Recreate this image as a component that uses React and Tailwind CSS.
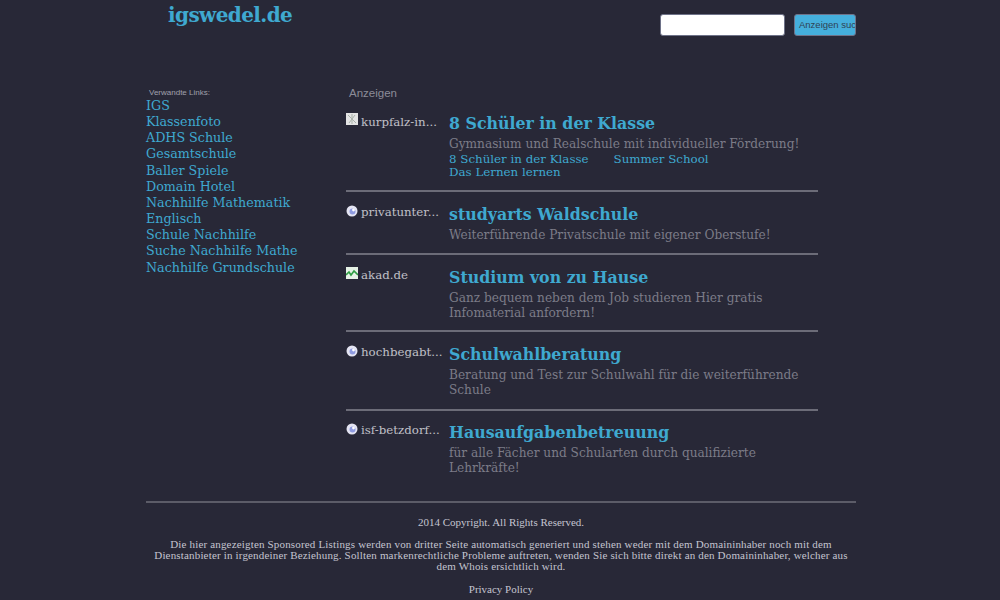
import React from "react";

const sideLinks = [
  "IGS",
  "Klassenfoto",
  "ADHS Schule",
  "Gesamtschule",
  "Baller Spiele",
  "Domain Hotel",
  "Nachhilfe Mathematik Englisch",
  "Schule Nachhilfe",
  "Suche Nachhilfe Mathe",
  "Nachhilfe Grundschule",
];

const Globe = () => (
  <svg width="12" height="12" viewBox="0 0 12 12" className="mt-[1px]">
    <circle cx="6" cy="6" r="5.5" fill="#e4e4f2" />
    <circle cx="6.5" cy="6.5" r="3" fill="#8f9be0" />
    <circle cx="7.5" cy="5" r="1.4" fill="#ffffff" />
  </svg>
);

const Kurpfalz = () => (
  <svg width="12" height="12" viewBox="0 0 12 12">
    <rect width="12" height="12" fill="#e4e4e4" />
    <path d="M2 2l8 8M9 2L3 10M6 1v10" stroke="#a9b2a9" strokeWidth="1" />
  </svg>
);

const Akad = () => (
  <svg width="12" height="12" viewBox="0 0 12 12">
    <rect width="12" height="12" fill="#e6f2e6" />
    <path d="M0 8l3-3 2 3 3-4 4 4" fill="none" stroke="#2f9e44" strokeWidth="1.6" />
  </svg>
);

const ads = [
  {
    icon: <Kurpfalz />,
    domain: "kurpfalz-in...",
    domainCls: "mt-[1px]",
    title: "8 Schüler in der Klasse",
    text: "Gymnasium und Realschule mit individueller Förderung!",
    textCls: "mt-[2px]",
    sub: ["8 Schüler in der Klasse", "Summer School", "Das Lernen lernen"],
    cls: "pt-[12px] pb-[11px]",
  },
  {
    icon: <Globe />,
    domain: "privatunter...",
    title: "studyarts Waldschule",
    text: "Weiterführende Privatschule mit eigener Oberstufe!",
    textCls: "mt-[2px]",
    cls: "pt-[12px] pb-[11px]",
  },
  {
    icon: <Akad />,
    domain: "akad.de",
    title: "Studium von zu Hause",
    text: "Ganz bequem neben dem Job studieren Hier gratis Infomaterial anfordern!",
    textCls: "mt-[2px]",
    cls: "pt-[12px] pb-[10px]",
  },
  {
    icon: <Globe />,
    domain: "hochbegabt...",
    title: "Schulwahlberatung",
    text: "Beratung und Test zur Schulwahl für die weiterführende Schule",
    textCls: "mt-[2px]",
    cls: "pt-[12px] pb-[12px]",
  },
  {
    icon: <Globe />,
    domain: "isf-betzdorf...",
    title: "Hausaufgabenbetreuung",
    text: "für alle Fächer und Schularten durch qualifizierte Lehrkräfte!",
    textCls: "mt-[2px]",
    cls: "pt-[11px] pb-[18px]",
  },
];

export default function App() {
  return (
    <div className="w-full h-[600px] overflow-hidden bg-[#282837] font-['DejaVu_Serif',serif]">
      <div className="w-[710px] ml-[146px]">
        {/* Header */}
        <div className="flex justify-between h-[85px]">
          <a className="ml-[22px] mt-[1px] text-[20px] leading-[28px] font-bold text-[#3fa9d0] tracking-[-0.6px]">igswedel.de</a>
          <div className="flex items-start gap-[9px] pt-[14px]">
            <input className="w-[125px] h-[22px] bg-white rounded-[3px] border border-[#6e7288]" />
            <div className="w-[62px] h-[22px] overflow-hidden whitespace-nowrap rounded-[3px] border border-[#6e7288] bg-[#45afdc] pl-[4px] font-['Liberation_Sans',sans-serif] text-[9.5px] leading-[19px] text-[#2f4254]">
              Anzeigen suchen
            </div>
          </div>
        </div>

        <div className="flex h-[416px]">
          {/* Sidebar */}
          <div className="w-[200px]">
            <div className="pl-[3px] font-['Liberation_Sans',sans-serif] text-[8px] leading-[11px] text-[#a0a0ac] mt-[2px]">Verwandte Links:</div>
            <div className="flex flex-col w-[155px] text-[12.7px] leading-[16.15px] text-[#3fa9d0]">
              {sideLinks.map((l) => (
                <a key={l}>{l}</a>
              ))}
            </div>
          </div>

          {/* Ads */}
          <div className="w-[472px]">
            <div className="pl-[3px] font-['Liberation_Sans',sans-serif] text-[11.5px] leading-[16px] text-[#8c8c98]">Anzeigen</div>
            {ads.map((ad, i) => (
              <div key={ad.domain} className={`flex ${ad.cls} ${i < ads.length - 1 ? "border-b-2 border-[#6c6c78]" : ""}`}>
                <div className="w-[103px] flex gap-[3px] shrink-0">
                  {ad.icon}
                  <span className={`text-[#c0c0c8] text-[11.8px] leading-[16px] whitespace-nowrap ${ad.domainCls || ""}`}>{ad.domain}</span>
                </div>
                <div className="flex-1">
                  <div className="text-[15.8px] leading-[22px] font-bold text-[#3fa9d0]">{ad.title}</div>
                  <div className={`text-[12.15px] leading-[14.5px] text-[#7c7c88] ${ad.textCls}`}>{ad.text}</div>
                  {ad.sub && (
                    <div className="text-[11.85px] leading-[13px] text-[#3fa9d0] mt-[1px]">
                      <a className="mr-[25px]">{ad.sub[0]}</a>
                      <a>{ad.sub[1]}</a>
                      <br />
                      <a>{ad.sub[2]}</a>
                    </div>
                  )}
                </div>
              </div>
            ))}
          </div>
        </div>

        {/* Footer */}
        <div className="border-t-2 border-[#5c5c68] pt-[14px] text-center text-[11px] leading-[11px] text-[#c4c4d0] font-['Liberation_Serif',serif]">
          <p>2014 Copyright. All Rights Reserved.</p>
          <p className="mt-[11px] px-[6px] tracking-[0.17px]">
            Die hier angezeigten Sponsored Listings werden von dritter Seite automatisch generiert und stehen weder mit dem Domaininhaber noch mit dem Dienstanbieter in irgendeiner Beziehung. Sollten markenrechtliche Probleme auftreten, wenden Sie sich bitte direkt an den Domaininhaber, welcher aus dem Whois ersichtlich wird.
          </p>
          <p className="mt-[12px]">Privacy Policy</p>
        </div>
      </div>
    </div>
  );
}
